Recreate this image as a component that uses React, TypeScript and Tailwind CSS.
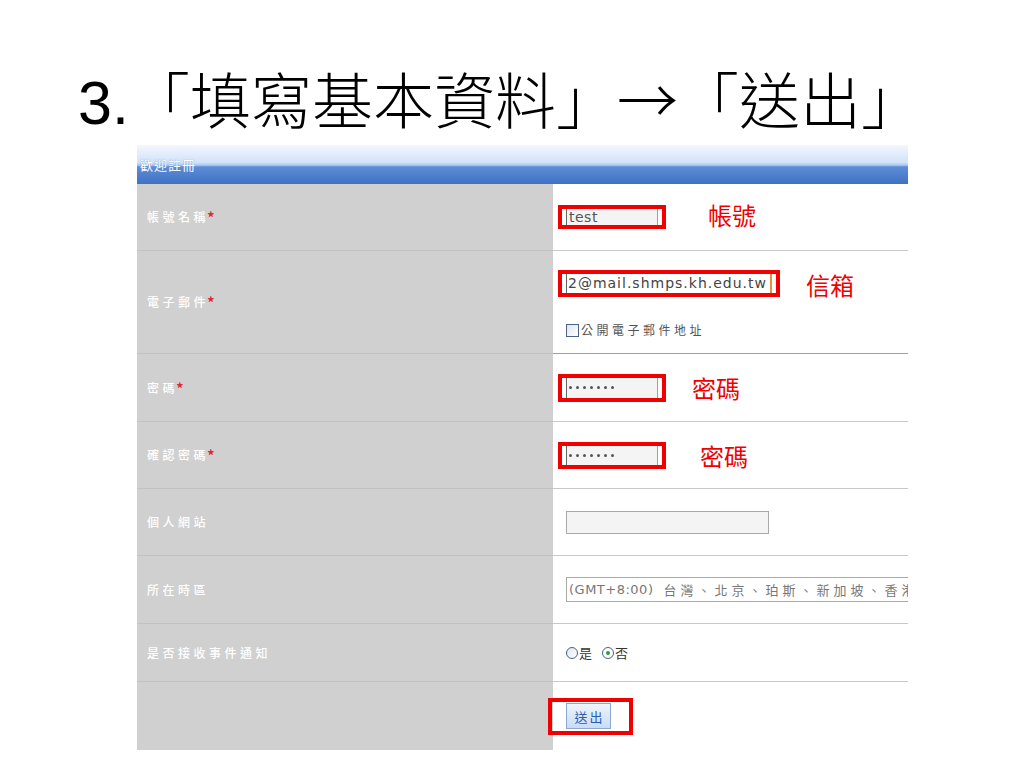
import React from 'react';

const cjk = "font-['Noto_Sans_CJK_TC','Noto_Sans',sans-serif]";

// 左欄標籤
function Label({ text, required }: { text: string; required?: boolean }) {
  return (
    <div className="pl-[10px] text-[12px] tracking-[3.5px] text-white font-medium flex items-center">
      {text}
      {required && <span className="text-[16px] leading-none text-[#e0242c] -ml-[2px]">*</span>}
    </div>
  );
}

function Dots() {
  return (
    <div className="flex items-center gap-[4px] pl-[2px]">
      {[0, 1, 2, 3, 4, 5, 6].map((i) => (
        <div key={i} className="w-[3px] h-[3px] rounded-full bg-[#555]" />
      ))}
    </div>
  );
}

function Note({ text, className }: { text: string; className: string }) {
  return <span className={`text-[24px] leading-none text-[#f00000] ${className}`}>{text}</span>;
}

interface RowProps {
  label: React.ReactNode;
  children: React.ReactNode;
  height: string;
  line?: string;
}

function Row({ label, children, height, line }: RowProps) {
  return (
    <div className={`grid grid-cols-[416px_1fr] ${height}`}>
      <div className={`flex items-center bg-[#d0d0d0] ${line ? 'border-b border-[#c2c2c2]' : ''}`}>{label}</div>
      <div className={`flex items-center pl-[5px] bg-white ${line ?? ''}`}>{children}</div>
    </div>
  );
}

export default function App() {
  return (
    <div className={`w-[1024px] h-[768px] bg-white overflow-hidden ${cjk}`}>
      <h1 className="mt-[68px] pl-[78px] text-[61px] leading-[60px] font-light text-black whitespace-nowrap">
        <span className="font-['Liberation_Sans',sans-serif] font-normal">3.</span>
        「填寫基本資料」→「送出」
      </h1>

      <div className="ml-[137px] mt-[12px] w-[771px] overflow-hidden">
        <div className="h-[39px] flex items-center pl-[3px] bg-[linear-gradient(to_bottom,#f3f7fe_0%,#d2e2f9_45%,#a9c6f1_52%,#5d8dd7_56%,#3f71c4_100%)]">
          <span className="text-[13px] tracking-[1px] text-white [text-shadow:0_0_1px_#5a80c0]">歡迎註冊</span>
        </div>

        <Row height="h-[67px]" line="border-b border-[#c8c8c8]" label={<Label text="帳號名稱" required />}>
          <div className="flex items-center">
            <div className="border-[4px] border-[#f00000] px-[4px] flex">
              <div className="w-[92px] h-[16px] bg-[#f4f4f4] border-l border-l-[#666] border-r border-r-[#a0a0a0] flex items-center pl-[2px] font-['DejaVu_Sans',sans-serif] text-[14px] tracking-[0.5px] text-[#555]">
                test
              </div>
            </div>
            <Note text="帳號" className="ml-[42px] -mt-[4px]" />
          </div>
        </Row>

        <Row height="h-[103px]" line="border-b border-[#f08a4b]" label={<Label text="電子郵件" required />}>
          <div className="flex flex-col self-stretch pt-[18px]">
            <div className="flex items-center">
              <div className="border-[4px] border-[#f00000] px-[4px] flex">
                <div className="w-[206px] h-[19px] bg-white border-l border-l-[#666] border-r-2 border-r-[#e8913a] flex items-center pl-[1px] font-['DejaVu_Sans',sans-serif] text-[14px] tracking-[1px] text-[#444] whitespace-nowrap overflow-hidden">
                  2@mail.shmps.kh.edu.tw
                </div>
              </div>
              <Note text="信箱" className="ml-[26px] mt-[4px]" />
            </div>
            <div className="flex items-center mt-[24px] ml-[8px]">
              <div className="w-[13px] h-[13px] border border-[#4d6185] bg-[linear-gradient(135deg,#dfe6ee,#ffffff)]" />
              <span className="ml-[2px] text-[12px] tracking-[3.5px] text-[#555]">公開電子郵件地址</span>
            </div>
          </div>
        </Row>

        <Row height="h-[68px]" line="border-b border-[#c8c8c8]" label={<Label text="密碼" required />}>
          <div className="flex items-center">
            <div className="border-[4px] border-[#f00000] px-[4px] flex">
              <div className="w-[92px] h-[20px] bg-[#f4f4f4] border-l border-l-[#666] border-r border-r-[#a0a0a0] flex items-center">
                <Dots />
              </div>
            </div>
            <Note text="密碼" className="ml-[26px]" />
          </div>
        </Row>

        <Row height="h-[67px]" line="border-b border-[#c8c8c8]" label={<Label text="確認密碼" required />}>
          <div className="flex items-center">
            <div className="border-[4px] border-[#f00000] px-[4px] flex">
              <div className="w-[92px] h-[19px] bg-[#f4f4f4] border-l border-l-[#666] border-r border-r-[#a0a0a0] flex items-center">
                <Dots />
              </div>
            </div>
            <Note text="密碼" className="ml-[34px] mt-[2px]" />
          </div>
        </Row>

        <Row height="h-[67px]" line="border-b border-[#c8c8c8]" label={<Label text="個人網站" />}>
          <div className="ml-[8px] w-[203px] h-[23px] bg-[#f4f4f4] border border-[#a9a9a9]" />
        </Row>

        <Row height="h-[68px]" line="border-b border-[#c8c8c8]" label={<Label text="所在時區" />}>
          <div className="ml-[8px] h-[25px] w-[400px] shrink-0 border border-[#a9a9a9] bg-white flex items-center pl-[2px] text-[13px] text-[#777] whitespace-nowrap">
            <span className="font-['DejaVu_Sans',sans-serif] tracking-[0.5px]">(GMT+8:00)</span>
            <span className="ml-[10px] tracking-[4px]">台灣、北京、珀斯、新加坡、香港</span>
          </div>
        </Row>

        <Row height="h-[58px]" line="border-b border-[#c8c8c8]" label={<Label text="是否接收事件通知" />}>
          <div className="ml-[8px] flex items-center text-[13px] text-[#333]">
            <div className="w-[12px] h-[12px] rounded-full border border-[#4d6185] bg-[linear-gradient(135deg,#dfe6ee,#ffffff)]" />
            <span className="ml-[1px]">是</span>
            <div className="ml-[10px] w-[12px] h-[12px] rounded-full border border-[#4d6185] bg-white flex items-center justify-center">
              <div className="w-[4px] h-[4px] rounded-full bg-[#2f9a3a]" />
            </div>
            <span className="ml-[1px]">否</span>
          </div>
        </Row>

        <Row height="h-[68px]" label={<div />}>
          <div className="relative ml-[8px]">
            <button className="w-[45px] h-[26px] border border-[#8aa8d0] bg-[linear-gradient(to_bottom,#eef4fc,#c9dcf5)] text-[13px] tracking-[2px] pl-[2px] text-[#2a5db0]">
              送出
            </button>
            <div className="absolute left-[-18px] top-[-5px] w-[85px] h-[37px] border-[4px] border-[#f00000]" />
          </div>
        </Row>
      </div>
    </div>
  );
}
